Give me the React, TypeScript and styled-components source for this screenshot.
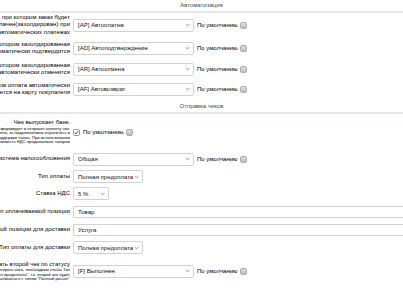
import React from "react";
import styled, { createGlobalStyle } from "styled-components";

const Global = createGlobalStyle`
  html, body { margin: 0; padding: 0; background: #fff; }
  body { overflow: hidden; }
`;

const Page = styled.div`
  width: 403px;
  height: 294px;
  overflow: hidden;
  font-family: "Liberation Sans", Arial, sans-serif;
  font-size: 6px;
  color: #000;
  background: #fff;
`;

const SectionHeader = styled.div<{ $h: number; $pt: number }>`
  height: ${(p) => p.$h}px;
  padding-top: ${(p) => p.$pt}px;
  box-sizing: border-box;
  text-align: center;
  color: #3f4b4f;
  font-size: 6px;
  line-height: 8px;
  border-bottom: 2px solid #e1e6e8;
`;

const Row = styled.div<{ $h: number }>`
  display: grid;
  grid-template-columns: 70px 1fr;
  column-gap: 3px;
  align-items: center;
  height: ${(p) => p.$h}px;
`;

const LabelCell = styled.div`
  display: flex;
  justify-content: flex-end;
  overflow: hidden;
`;

const LabelText = styled.div`
  flex-shrink: 0;
  white-space: nowrap;
  text-align: right;
  line-height: 7.5px;
  color: #000;
`;

const Hint = styled.span`
  display: block;
  font-size: 4.2px;
  line-height: 4.4px;
  color: #000;
`;

const Field = styled.div`
  display: flex;
  align-items: center;
  gap: 3px;
  min-width: 0;
`;

const SelectBox = styled.div<{ $w: number }>`
  width: ${(p) => p.$w}px;
  height: 13px;
  flex-shrink: 0;
  box-sizing: border-box;
  border: 1px solid #cfd3d5;
  border-radius: 2px;
  background: #fff;
  display: flex;
  align-items: center;
  justify-content: space-between;
  padding: 0 3px 0 4px;
  color: #111;
`;

const TextInput = styled.input`
  width: 340px;
  height: 12px;
  flex-shrink: 0;
  box-sizing: border-box;
  border: 1px solid #cfd3d5;
  border-radius: 1px;
  padding: 0 4px;
  font-family: inherit;
  font-size: 6px;
  color: #111;
  outline: none;
  background: #fff;
`;

const DefaultLabel = styled.span`
  white-space: nowrap;
  display: flex;
  align-items: center;
  gap: 2px;
`;

const GrayBox = styled.span`
  display: inline-block;
  width: 7px;
  height: 7px;
  box-sizing: border-box;
  border: 1px solid #a9adb0;
  border-radius: 2px;
  background: linear-gradient(#dcdedf, #bcbfc1);
`;

const Chevron = () => (
  <svg width="5" height="4" viewBox="0 0 5 4">
    <path d="M0.6 1 L2.5 2.9 L4.4 1" fill="none" stroke="#666" strokeWidth="0.7" />
  </svg>
);

const CheckedBox = () => (
  <svg width="7" height="7" viewBox="0 0 7 7">
    <rect x="0.5" y="0.5" width="6" height="6" rx="1" fill="#fff" stroke="#8f9aa3" />
    <path d="M1.6 3.6 L3 5 L5.5 1.8" fill="none" stroke="#4a5a66" strokeWidth="0.9" />
  </svg>
);

const Select = ({ w, value }: { w: number; value: string }) => (
  <SelectBox $w={w}>
    <span>{value}</span>
    <Chevron />
  </SelectBox>
);

const Default = () => (
  <DefaultLabel>
    По умолчанию <GrayBox />
  </DefaultLabel>
);

const Label = ({ lines, hints }: { lines: string[]; hints?: string[] }) => (
  <LabelCell>
    <LabelText>
      {lines.map((l, i) => (
        <div key={i}>{l}</div>
      ))}
      {hints?.map((h, i) => (
        <Hint key={"h" + i}>{h}</Hint>
      ))}
    </LabelText>
  </LabelCell>
);

export default function App() {
  return (
    <Page>
      <Global />
      <SectionHeader $h={13} $pt={1}>Автоматизация</SectionHeader>

      <Row $h={24}>
        <Label lines={["Статус, при котором заказ будет", "оплачен(захолдирован) при", "автоматических платежах"]} />
        <Field>
          <Select w={121} value="[AP] Автоплатеж" />
          <Default />
        </Field>
      </Row>
      <Row $h={22}>
        <Label lines={["Статус, при котором захолдированная", "сумма автоматически подтвердится"]} />
        <Field>
          <Select w={121} value="[AD] Автоподтверждение" />
          <Default />
        </Field>
      </Row>
      <Row $h={20}>
        <Label lines={["Статус, при котором захолдированная", "сумма автоматически отменится"]} />
        <Field>
          <Select w={121} value="[AR] Автоотмена" />
          <Default />
        </Field>
      </Row>
      <Row $h={20}>
        <Label lines={["Статус, при котором оплата автоматически", "вернется на карту покупателя"]} />
        <Field>
          <Select w={121} value="[AF] Автовозврат" />
          <Default />
        </Field>
      </Row>

      <SectionHeader $h={15} $pt={3}>Отправка чеков</SectionHeader>

      <Row $h={36}>
        <Label
          lines={["Чек выпускает банк."]}
          hints={[
            "Банк сам сформирует и отправит клиенту чек.",
            "Если услуга не подключена, за подключением обратитесь в",
            "службу поддержки банка. При использовании",
            "указывайте стоимость НДС продаваемых товаров",
          ]}
        />
        <Field>
          <CheckedBox />
          <Default />
        </Field>
      </Row>
      <Row $h={18}>
        <Label lines={["Система налогообложения"]} />
        <Field>
          <Select w={121} value="Общая" />
          <Default />
        </Field>
      </Row>
      <Row $h={17}>
        <Label lines={["Тип оплаты"]} />
        <Field>
          <Select w={70} value="Полная предоплата" />
        </Field>
      </Row>
      <Row $h={17}>
        <Label lines={["Ставка НДС"]} />
        <Field>
          <Select w={36} value="5 %" />
        </Field>
      </Row>
      <Row $h={19}>
        <Label lines={["Тип оплачиваемой позиции"]} />
        <Field>
          <TextInput readOnly value="Товар" />
        </Field>
      </Row>
      <Row $h={18}>
        <Label lines={["Тип оплачиваемой позиции для доставки"]} />
        <Field>
          <TextInput readOnly value="Услуга" />
        </Field>
      </Row>
      <Row $h={17}>
        <Label lines={["Тип оплаты для доставки"]} />
        <Field>
          <Select w={70} value="Полная предоплата" />
        </Field>
      </Row>
      <Row $h={30}>
        <Label
          lines={["Выбивать второй чек по статусу"]}
          hints={[
            "Для выбивания второго чека, необходимо чтобы Тип",
            "оплаты был \"Полная предоплата\", т.к. второй чек будет",
            "выбиваться с типом \"Полный расчет\"",
          ]}
        />
        <Field>
          <Select w={121} value="[F] Выполнен" />
          <Default />
        </Field>
      </Row>
    </Page>
  );
}
